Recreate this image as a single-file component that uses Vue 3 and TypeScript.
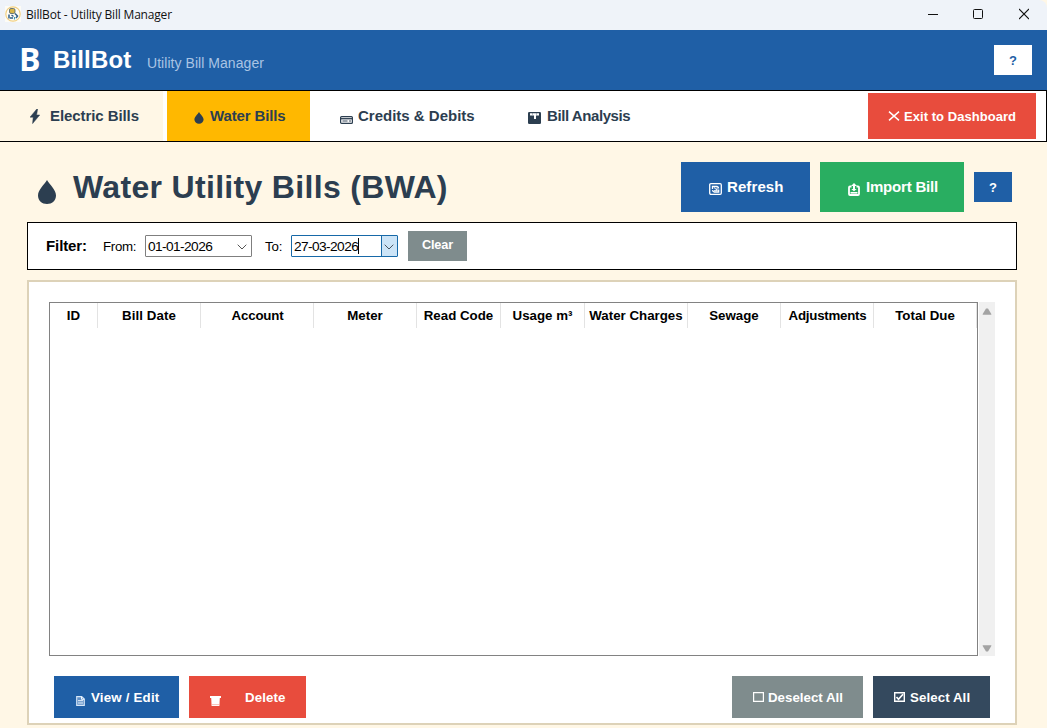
<script setup lang="ts">
import { ref } from 'vue'

interface Column {
  label: string
  key: string
}

const columns: Column[] = [
  { label: 'ID', key: 'id' },
  { label: 'Bill Date', key: 'date' },
  { label: 'Account', key: 'account' },
  { label: 'Meter', key: 'meter' },
  { label: 'Read Code', key: 'code' },
  { label: 'Usage m³', key: 'usage' },
  { label: 'Water Charges', key: 'charges' },
  { label: 'Sewage', key: 'sewage' },
  { label: 'Adjustments', key: 'adjustments' },
  { label: 'Total Due', key: 'total' },
]
const fromDate = ref('01-01-2026')
const toDate = ref('27-03-2026')
</script>

<template>
  <div class="window">
    <div class="titlebar">
      <svg class="app-icon" width="16" height="16" viewBox="0 0 16 16">
        <rect width="16" height="16" fill="#fdfcf6" />
        <circle cx="8" cy="8" r="7.2" fill="#fffdf5" stroke="#f0cf83" stroke-width="1.2" />
        <rect x="4.5" y="2.5" width="5.5" height="5" rx="1.5" fill="#d9b648" stroke="#49606b" stroke-width=".8" />
        <path d="M4 8.5v4M5 12h3M6.5 9l2 1.5M10 7.5l2.5 2.5-1.5 2" fill="none" stroke="#315e86" stroke-width="1.5" />
        <path d="M9.5 11v2.5" stroke="#3f9db8" stroke-width="1.2" />
      </svg>
      <span class="window-title">BillBot - Utility Bill Manager</span>
      <div class="window-controls">
        <svg width="10" height="12" viewBox="0 0 10 12"><path d="M0 6.5h10" stroke="#111" /></svg>
        <svg width="10" height="12" viewBox="0 0 10 12"><rect x=".5" y="1.5" width="9" height="9" rx="1" fill="none" stroke="#111" /></svg>
        <svg width="10" height="12" viewBox="0 0 10 12"><path d="M0 1l10 10M10 1L0 11" stroke="#111" stroke-width="1.1" /></svg>
      </div>
    </div>

    <header class="header">
      <span class="logo">B</span>
      <span class="brand">BillBot</span>
      <span class="tagline">Utility Bill Manager</span>
      <button class="help help-light">?</button>
    </header>

    <nav class="nav">
      <div class="tab tab-electric">
        <svg width="10" height="15" viewBox="0 0 10 15"><path d="M6.800 0L0 8.200h3.200L2.600 14.600 9.700 6H6.600L7.600 0z" fill="#2c3e50" stroke="#2c3e50" stroke-width=".5" /></svg>
        <span>Electric Bills</span>
      </div>
      <div class="tab tab-water">
        <svg width="10" height="12" viewBox="0 0 10 12"><path d="M5 0C4 2 .4 4.800.4 7.600a4.500 4.100 0 0 0 9.200 0C9.600 4.800 6 2 5 0z" fill="#2c3e50" /></svg>
        <span>Water Bills</span>
      </div>
      <div class="tab tab-credits">
        <svg width="13" height="8" viewBox="0 0 13 8"><rect x=".6" y=".6" width="11.800" height="6.800" rx="1" fill="#f7f8f9" stroke="#2c3e50" stroke-width="1.200" /><path d="M1 2.700h11" stroke="#2c3e50" stroke-width="1.300" /><path d="M2.500 5h5M9 5h2" stroke="#2c3e50" stroke-width=".9" /></svg>
        <span>Credits &amp; Debits</span>
      </div>
      <div class="tab tab-analysis">
        <svg width="13" height="12" viewBox="0 0 13 12"><rect width="13" height="12" rx="1.300" fill="#2c3e50" /><path d="M2 1.200h9v2.300H8v3.500H6V3.500H2z" fill="#fff" /><path d="M4.500 1.500v1M8.500 1.500v1" stroke="#2c3e50" stroke-width=".6" /></svg>
        <span>Bill Analysis</span>
      </div>
      <button class="exit">
        <svg width="12" height="10" viewBox="0 0 12 10"><path d="M1 .6l10 8.800M11 .6L1 9.400" stroke="#fff" stroke-width="1.400" /></svg>
        <span>Exit to Dashboard</span>
      </button>
    </nav>

    <main class="content">
      <section class="heading">
        <svg class="heading-drop" width="18" height="24" viewBox="0 0 18 24"><path d="M9 0C6.500 4.500 0 9.500 0 15.500C0 20.500 4 24 9 24s9-3.500 9-8.500C18 9.500 11.500 4.500 9 0z" fill="#2c3e50" /></svg>
        <h1>Water Utility Bills (BWA)</h1>
        <div class="heading-actions">
          <button class="action refresh">
            <svg width="13" height="12" viewBox="0 0 13 12"><rect x=".7" y=".7" width="11.600" height="10.600" rx="1.200" fill="none" stroke="#fff" stroke-width="1.300" /><path d="M3.500 6V3.500h4.500a2 2 0 0 1 1.600 2M9.700 6.500V9H5.300a2 2 0 0 1-1.700-2" fill="none" stroke="#fff" stroke-width="1.300" /><path d="M5 4.500l3.500 3M8 4.700v3H5" stroke="#fff" fill="none" stroke-width="1" /></svg>
            <span>Refresh</span>
          </button>
          <button class="action import">
            <svg width="12" height="13" viewBox="0 0 12 13"><path d="M3.500 3.500H2a1 1 0 0 0-1 1v6.500a1 1 0 0 0 1 1h8a1 1 0 0 0 1-1V4.500a1 1 0 0 0-1-1H8.500" fill="none" stroke="#fff" stroke-width="1.800" /><path d="M5 6V3H3l3-3 3 3H7v3h1.700L6 8.300 3.300 6z" fill="#fff" /><path d="M2.500 9.800h7" stroke="#fff" stroke-width="1.600" /></svg>
            <span>Import Bill</span>
          </button>
          <button class="help help-blue">?</button>
        </div>
      </section>

      <section class="filter">
        <strong>Filter:</strong>
        <label class="from-label">From:</label>
        <div class="date-box">
          <span>{{ fromDate }}</span>
          <svg width="10" height="6" viewBox="0 0 10 6"><path d="M.7.700L5 5 9.300.700" fill="none" stroke="#555" /></svg>
        </div>
        <label class="to-label">To:</label>
        <div class="date-box focused">
          <span>{{ toDate }}</span><i class="caret"></i>
          <div class="drop"><svg width="10" height="6" viewBox="0 0 10 6"><path d="M.7.700L5 5 9.300.700" fill="none" stroke="#4a5560" /></svg></div>
        </div>
        <button class="clear">Clear</button>
      </section>

      <section class="card">
        <div class="table-area">
          <div class="table">
            <div class="table-head">
              <div v-for="c in columns" :key="c.key" class="th" :class="c.key">{{ c.label }}</div>
            </div>
          </div>
          <div class="scrollbar">
            <svg width="10" height="7" viewBox="0 0 10 7"><path d="M4 .5h2L9.300 6v.700H.7V6z" fill="#a3a3a3" /></svg>
            <svg width="10" height="7" viewBox="0 0 10 7"><path d="M.7.300h8.600V1L6 6.500H4L.7 1z" fill="#a3a3a3" /></svg>
          </div>
        </div>
        <div class="footer">
          <button class="foot view">
            <svg width="9" height="10" viewBox="0 0 9 10"><path d="M.7.600h5l2.600 2.500v6.300H.7z" fill="#5f8fc6" stroke="#d8e8f8" stroke-width="1.100" /><path d="M2 4.700h5M2 7h5M5.500.8v2.500h2.700" fill="none" stroke="#eef6ff" stroke-width="1" /></svg>
            <span>View / Edit</span>
          </button>
          <button class="foot delete">
            <svg width="11" height="10" viewBox="0 0 11 10"><path d="M0 0h11v2H0z" fill="#fff" /><path d="M1.200 1.800h8.600L9.400 10H1.600z" fill="#fff" /><path d="M2 8.600h7" stroke="#f3a399" stroke-width=".7" /></svg>
            <span>Delete</span>
          </button>
          <button class="foot deselect">
            <svg width="11" height="10" viewBox="0 0 11 10"><path d="M.6.600h9.800v8.800H.6z" fill="none" stroke="#fff" stroke-width="1.200" /></svg>
            <span>Deselect All</span>
          </button>
          <button class="foot select">
            <svg width="11" height="10" viewBox="0 0 11 10"><path d="M.7.700h9.600v8.600H.7z" fill="none" stroke="#fff" stroke-width="1.400" /><path d="M2.500 5l2 2.200L9 2.200" fill="none" stroke="#fff" stroke-width="1.700" /></svg>
            <span>Select All</span>
          </button>
        </div>
      </section>
    </main>
  </div>
</template>

<style>
body {
  background: #fff7e6;
  overflow: hidden;
}
</style>

<style scoped>
* { box-sizing: border-box; }
.window {
  width: 1047px;
  height: 728px;
  overflow: hidden;
  background: #fff7e6;
  font-family: "Liberation Sans", Arial, sans-serif;
  color: #2c3e50;
}
button {
  border: 0;
  padding: 0;
  margin: 0;
  font-family: inherit;
  font-weight: bold;
  color: #fff;
}
svg { display: block; flex: none; }
span, label, strong { white-space: nowrap; }

.titlebar {
  height: 30px;
  display: flex;
  align-items: center;
  padding: 0 18px 2px 5px;
  background: #eff3f9;
  border-top-right-radius: 8px;
}
.window-title {
  margin-left: 5px;
  font: 12px/16px "Open Sans", "Noto Sans", sans-serif;
  letter-spacing: -.18px;
  color: #111;
  padding-top: 2px;
}
.window-controls { margin-left: auto; display: flex; gap: 35px; }
.window-controls svg:last-child { margin-left: 1px; }

.header {
  height: 60px;
  background: #1f5fa6;
  display: flex;
  padding: 0 15px 0 20px;
  color: #fff;
}
.logo { width: 33px; font: 700 32px/58px "Open Sans", "Noto Sans", sans-serif; margin-left: -1px; margin-right: 1px; }
.brand { width: 94px; font-size: 24px; font-weight: bold; line-height: 60px; letter-spacing: .15px; }
.tagline { font-size: 14px; line-height: 66px; letter-spacing: .05px; color: #a9c4e4; }
.help { width: 38px; height: 30px; font-size: 13px; }
.help-light { margin: 15px 0 0 auto; background: #fff; color: #1f5fa6; }
.help-blue { background: #1f5fa6; }

.nav {
  height: 52px;
  border: 1px solid #000;
  border-left: 0;
  background: #fff;
  display: flex;
}
.tab {
  display: flex;
  font-size: 15px;
  font-weight: bold;
  line-height: 50px;
}
.tab-electric { width: 163px; padding-left: 30px; background: #fff7e6; margin-right: 4px; letter-spacing: -.08px; }
.tab-electric svg { margin: 18px 10px 0 0; }
.tab-water { width: 143px; padding-left: 27px; background: #ffb800; letter-spacing: -.13px; }
.tab-water svg { margin: 21px 6px 0 0; }
.tab-credits { padding-left: 30px; width: 189px; }
.tab-credits svg { margin: 25px 5px 0 0; }
.tab-analysis { padding-left: 29px; letter-spacing: -.42px; }
.tab-analysis svg { margin: 21px 6px 0 0; }
.exit {
  width: 168px;
  height: 46px;
  margin: 2px 10px 0 auto;
  padding-left: 20px;
  background: #e84c3d;
  display: flex;
  align-items: center;
  gap: 4px;
  font-size: 13px;
  letter-spacing: .05px;
}

.content { padding: 20px 30px 0 27px; }
.heading { height: 50px; display: flex; padding-left: 11px; }
.heading-drop { margin-top: 18px; }
h1 { margin: 0 0 0 17px; font-size: 32px; line-height: 50px; letter-spacing: .32px; white-space: nowrap; }
.heading-actions { margin-left: auto; padding-right: 5px; display: flex; gap: 10px; align-items: center; }
.action { height: 50px; display: flex; align-items: center; font-size: 15px; }
.action svg { margin-top: 4px; }
.action span { margin-top: -2px; }
.refresh { width: 129px; padding-left: 28px; background: #1f5fa6; letter-spacing: .1px; }
.refresh svg { margin-right: 5px; }
.import { width: 144px; padding-left: 28px; background: #29ae61; letter-spacing: -.2px; }
.import svg { margin-right: 6px; }

.filter {
  height: 48px;
  margin-top: 10px;
  border: 1px solid #000;
  background: #fff;
  display: flex;
  align-items: center;
  padding-left: 18px;
  color: #000;
  font-size: 13.300px;
}
.filter strong { width: 57px; font-size: 15px; letter-spacing: -.1px; margin-top: -2px; }
.from-label { width: 42px; letter-spacing: -.3px; }
.to-label { width: 26px; margin-left: 13px; letter-spacing: -.2px; }
.date-box {
  width: 107px;
  height: 22px;
  border: 1px solid #7f7f7f;
  border-radius: 1px;
  display: flex;
  align-items: center;
  padding: 0 4px 0 2px;
  font-size: 13.700px;
  letter-spacing: -.58px;
}
.date-box > svg { margin-left: auto; margin-top: 2px; }
.focused { border-color: #1769a8; padding-right: 0; }
.caret { width: 1px; height: 16px; background: #000; }
.drop {
  width: 16px;
  height: 20px;
  margin-left: auto;
  padding: 8px 0 0 2px;
  background: #cce4f7;
  border-left: 1px solid #1769a8;
}
.clear { width: 59px; height: 30px; margin-left: 10px; margin-top: -1px; padding-bottom: 1px; background: #7f8c8d; font-size: 12.700px; letter-spacing: -.1px; }

.card {
  height: 445px;
  margin-top: 10px;
  border: 2px solid #ddd2b8;
  background: #fff;
  padding: 20px 20px 0;
}
.table-area { display: flex; height: 354px; gap: 1px; }
.table { width: 929px; border: 1px solid #828282; }
.table-head {
  height: 25px;
  display: grid;
  grid-template-columns: 48px 103px 113px 103px 84px 84px 103px 93px 93px 103px;
  font-size: 13.300px;
  font-weight: bold;
  line-height: 25px;
  color: #000;
}
.th { border-right: 1px solid #e3e3e3; text-align: center; white-space: nowrap; }
.account { letter-spacing: -.2px; padding-left: 1px; }
.adjustments { letter-spacing: -.25px; padding-left: 1px; }
.date { letter-spacing: .08px; }
.scrollbar {
  width: 16px;
  background: #f0f0f0;
  display: flex;
  flex-direction: column;
  justify-content: space-between;
  align-items: center;
  padding: 6px 0 4px;
}
.footer { display: flex; padding: 20px 5px 0; gap: 10px; }
.foot { height: 42px; display: flex; align-items: center; font-size: 13.300px; }
.view { width: 125px; padding-left: 22px; background: #1f5fa6; letter-spacing: .2px; }
.view svg { margin: 8px 6px 0 0; }
.delete { width: 117px; padding-left: 21px; background: #e84c3d; letter-spacing: .12px; }
.delete svg { margin: 7px 24px 0 0; }
.deselect { width: 131px; padding-left: 21px; margin-left: auto; background: #7f8c8d; }
.deselect svg { margin-right: 4px; }
.select { width: 117px; padding-left: 21px; background: #34495e; letter-spacing: .08px; }
.select svg { margin-right: 5px; }
</style>
